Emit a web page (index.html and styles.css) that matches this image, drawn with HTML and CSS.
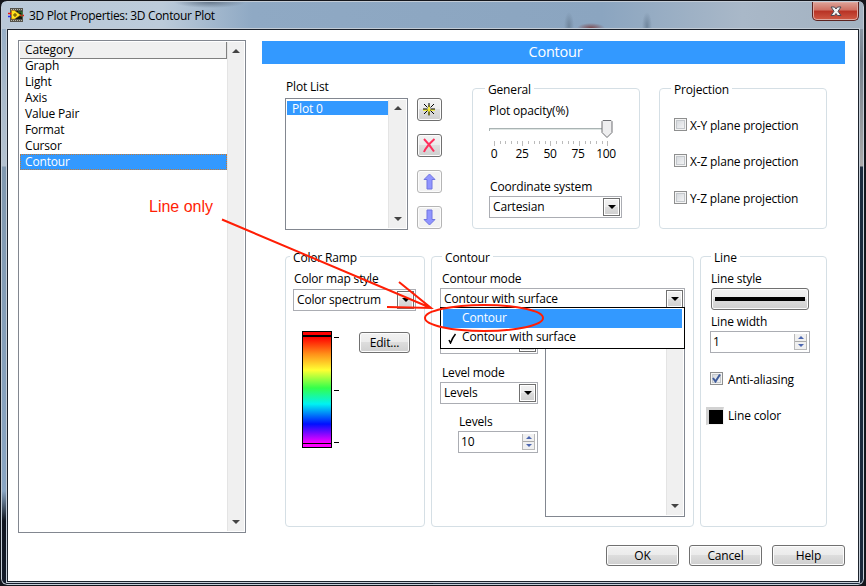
FILE: index.html
```
<!DOCTYPE html>
<html lang="en">
<head>
    <meta charset="UTF-8">
    <meta name="viewport" content="width=device-width, initial-scale=1.0">
    <title>3D Plot Properties: 3D Contour Plot</title>
    <link rel="stylesheet" href="styles.css">
</head>
<body>
    <div class="window">
        <div class="titlebar">
            <svg class="app-icon" width="16" height="15" viewBox="0 0 16 15">
                <rect x="2" y="0" width="13" height="14" fill="#55534c"/>
                <path d="M3 1.5h12M3 12.5h12" stroke="#bbb8a8" stroke-dasharray="1 1"/>
                <rect x="3" y="3" width="11" height="8" fill="#151a10"/>
                <path d="M0 5.5h4M12 7.5h4" stroke="#f01010" stroke-width="1.5"/>
                <path d="M0 8.5h4" stroke="#2030f0" stroke-width="1.5"/>
                <path d="M10 4h4v5" stroke="#3c8a3c" fill="none"/>
                <path d="M3.500 2.500h3l6 4.500-6 4h-3z" fill="#ffe61e" stroke="#c77a10" stroke-width=".6"/>
                <path d="M5 7h4M7 5v4" stroke="#5c4300"/>
            </svg>
            <span class="title">3D Plot Properties: 3D Contour Plot</span>
            <div class="close">
                <svg width="12" height="11" viewBox="0 0 12 11">
                    <path d="M1 1h3.5L6 3l1.5-2H11L8 5.3 11 9.5H7.5L6 7.500l-1.500 2H1l3-4.200z" fill="#f4f4f4" stroke="#4c4a55"/>
                </svg>
            </div>
        </div>

        <div class="client">
            <div class="listbox category">
                <ul class="items">
                    <li class="head">Category</li>
                    <li>Graph</li>
                    <li>Light</li>
                    <li>Axis</li>
                    <li>Value Pair</li>
                    <li>Format</li>
                    <li>Cursor</li>
                    <li class="selected">Contour</li>
                </ul>
                <div class="scrollbar"><i class="up"></i><i class="down"></i></div>
            </div>

            <div class="main">
                <div class="banner">Contour</div>

                <div class="row row-top">
                    <div class="plots">
                        <div class="label">Plot List</div>
                        <div class="plots-body">
                            <div class="listbox plot-list">
                                <ul class="items">
                                    <li class="selected">Plot 0</li>
                                </ul>
                                <div class="scrollbar"><i class="up"></i><i class="down"></i></div>
                            </div>
                            <div class="tools">
                                <button class="tool">
                                    <svg width="15" height="15" viewBox="0 0 15 15">
                                        <path d="M1 8h12M7 3v10" stroke="#f7ee1c" stroke-width="1.500"/>
                                        <path d="M1 7h4.500M8.500 7H13M7 1v4M7 9.500v4M2 2l3.500 3.500M12 2L8.500 5.500M2 12l3.500-3.500M12 12L8.500 8.500" stroke="#000"/>
                                    </svg>
                                </button>
                                <button class="tool">
                                    <svg width="15" height="15" viewBox="0 0 15 15">
                                        <path d="M2 1c3 3 7 8 10 12.500M12.500 1C8 5 4 9 2 14" stroke="#ff2f5c" stroke-width="2" fill="none"/>
                                    </svg>
                                </button>
                                <button class="tool disabled">
                                    <svg width="13" height="17" viewBox="0 0 13 17">
                                        <path d="M6.500 1l5.500 5.500H9v9.500H4V6.500H1z" fill="#9095ff" stroke="#7175e0"/>
                                    </svg>
                                </button>
                                <button class="tool disabled">
                                    <svg width="13" height="17" viewBox="0 0 13 17">
                                        <path d="M6.500 16l5.500-5.500H9V1H4v9.500H1z" fill="#9095ff" stroke="#7175e0"/>
                                    </svg>
                                </button>
                            </div>
                        </div>
                    </div>

                    <div class="group general">
                        <div class="legend">General</div>
                        <div class="label">Plot opacity(%)</div>
                        <svg class="slider" width="126" height="27" viewBox="0 0 126 27">
                            <path d="M0 9.500h115" stroke="#a9b3b3"/>
                            <path d="M0 10.500h115" stroke="#dfe6e4"/>
                            <path d="M.5 9v3" stroke="#a9b3b3"/>
                            <path class="minor" d="M11.500 22v3M16.500 22v3M22.500 22v3M28.500 22v3M39.500 22v3M45.500 22v3M50.500 22v3M56.500 22v3M67.500 22v3M73.500 22v3M79.500 22v3M84.500 22v3M96.500 22v3M101.500 22v3M107.500 22v3M113.500 22v3"/>
                            <path class="major" d="M5.500 22v5M33.500 22v5M61.500 22v5M90.500 22v5M118.500 22v5"/>
                            <path d="M114 1.500h8l1 1v11l-5 5-5-5v-11z" fill="#eeeeef" stroke="#6e6f73"/>
                        </svg>
                        <div class="scale">
                            <span>0</span><span>25</span><span>50</span><span>75</span><span>100</span>
                        </div>
                        <div class="label coord">Coordinate system</div>
                        <div class="select"><span>Cartesian</span><i class="drop"></i></div>
                    </div>

                    <div class="group projection">
                        <div class="legend">Projection</div>
                        <div class="check"><i class="box"></i>X-Y plane projection</div>
                        <div class="check"><i class="box"></i>X-Z plane projection</div>
                        <div class="check"><i class="box"></i>Y-Z plane projection</div>
                    </div>
                </div>

                <div class="row row-bottom">
                    <div class="group ramp">
                        <div class="legend">Color Ramp</div>
                        <div class="label">Color map style</div>
                        <div class="select"><span>Color spectrum</span><i class="drop"></i></div>
                        <div class="ramp-body">
                            <div class="spectrum"></div>
                            <div class="ticks"><i></i><i></i><i></i></div>
                            <button class="btn edit">Edit...</button>
                        </div>
                    </div>

                    <div class="group contour">
                        <div class="legend">Contour</div>
                        <div class="label">Contour mode</div>
                        <div class="select mode">
                            <span>Contour with surface</span><i class="drop"></i>
                            <ul class="menu">
                                <li class="selected">Contour</li>
                                <li>
                                    <svg class="tick" width="9" height="11" viewBox="0 0 9 11"><path d="M1 7l1.500 3C4 6 5 4 7.500 1" stroke="#000" stroke-width="1.500" fill="none"/></svg>
                                    Contour with surface
                                </li>
                            </ul>
                        </div>
                        <div class="contour-body">
                            <div class="levels">
                                <div class="select"><i class="drop"></i></div>
                                <div class="label">Level mode</div>
                                <div class="select"><span>Levels</span><i class="drop"></i></div>
                                <div class="level-count">
                                    <div class="label">Levels</div>
                                    <div class="spinner"><span>10</span><i class="arrows"><b class="inc"></b><b class="dec"></b></i></div>
                                </div>
                            </div>
                            <div class="listbox level-list">
                                <div class="items"></div>
                                <div class="scrollbar"><i class="up"></i><i class="down"></i></div>
                            </div>
                        </div>
                    </div>

                    <div class="group line">
                        <div class="legend">Line</div>
                        <div class="label">Line style</div>
                        <button class="btn line-style"><i></i></button>
                        <div class="label width-label">Line width</div>
                        <div class="spinner"><span>1</span><i class="arrows"><b class="inc"></b><b class="dec"></b></i></div>
                        <div class="check">
                            <i class="box"><svg width="9" height="9" viewBox="0 0 9 9"><path d="M1 4l2.500 3.500L8 .5" stroke="#3f5c9c" stroke-width="2" fill="none"/></svg></i>
                            Anti-aliasing
                        </div>
                        <div class="color"><i class="swatch"></i>Line color</div>
                    </div>
                </div>

                <div class="actions">
                    <button class="btn">OK</button>
                    <button class="btn">Cancel</button>
                    <button class="btn">Help</button>
                </div>
            </div>
        </div>

        <!-- callout drawn over the dialog -->
        <svg class="callout" width="866" height="586" viewBox="0 0 866 586">
            <text x="149" y="212">Line only</text>
            <path d="M222 219.500L431 308M399 282l32 26-44-1"/>
            <ellipse cx="484" cy="318" rx="59" ry="13"/>
        </svg>
    </div>
</body>
</html>
```
FILE: styles.css
```
* {
    box-sizing: border-box;
}

body {
    margin: 0;
    background: #14161c;
    font-family: "Open Sans", "Noto Sans", sans-serif;
    font-size: 12px;
    line-height: 16px;
    letter-spacing: -0.17px;
    color: #000;
}

ul {
    list-style: none;
    margin: 0;
    padding: 0;
}

i {
    display: block;
    font-style: normal;
}

.window {
    position: relative;
    width: 865px;
    height: 586px;
    padding: 0 5px 4px 6px;
    border: 1px solid #14161c;
    border-radius: 7px;
    box-shadow: inset 0 0 0 1px #c3ccd6;
    background: linear-gradient(#8fa9c4 0, #a9bacb 90px, #b4c2d0 165px, #8199b0 166px, #8aa6c4 490px, #10151f 520px, #141c2b 100%) left / 50% 100% no-repeat,
        linear-gradient(#9aa9b8 0, #75808c 60px, #aaa 165px, #1c2b3e 166px, #1c2a3c 100%) right / 50% 100% no-repeat;
    overflow: hidden;
}

.titlebar {
    display: flex;
    align-items: center;
    height: 27px;
    margin: 1px -4px 0 -5px;
    padding-left: 6px;
    background:
        radial-gradient(ellipse 14px 5px at 589px 26px, #7c4a50, transparent),
        radial-gradient(ellipse 5px 14px at 567px 24px, #71879e, transparent),
        radial-gradient(ellipse 5px 14px at 645px 24px, #71879e, transparent),
        radial-gradient(ellipse 36px 6px at 208px 0, #66788c, transparent),
        linear-gradient(90deg, #b9c8d8 0, #bccbda 160px, #8fa9c4 250px, #8ba5c0 600px, #a9b8c8 740px, #a3b2c1 100%);
}

.title {
    flex: 1;
    margin-left: 5px;
    letter-spacing: -0.33px;
}

.close {
    display: flex;
    align-items: center;
    justify-content: center;
    align-self: flex-start;
    width: 47px;
    height: 19px;
    margin-right: 4px;
    border: 1px solid #5c2320;
    border-top: 0;
    border-radius: 0 0 5px 5px;
    box-shadow: inset 0 0 0 1px #e0aaa2;
    background: linear-gradient(#dda398, #cf6f62 45%, #b83224 50%, #cf5a45);
}

.client {
    display: flex;
    width: 852px;
    height: 553px;
    padding: 10px 13px 0 10px;
    border: 1px solid #1c222c;
    outline: 1px solid #c3ccd6;
    background: #fff;
}

.listbox {
    display: flex;
    padding: 1px;
    border: 1px solid #828790;
    background: #fff;
}

.items {
    flex: 1;
}

.selected {
    background: #3399ff;
    color: #fff;
}

.category {
    width: 228px;
    height: 493px;
}

.category li {
    height: 16px;
    padding-left: 5px;
}

.category .head {
    height: 17px;
    margin-bottom: -1px;
    border: solid #808080;
    border-width: 0 1px 1px 0;
    background: #f0f0f0;
}

.category .selected {
    outline: 1px dotted #c77a33;
    outline-offset: -1px;
}

.scrollbar {
    display: flex;
    flex-direction: column;
    justify-content: space-between;
    align-items: center;
    width: 17px;
    padding: 7px 0;
    border-left: 1px solid #e4e4e4;
    background: #f0f0f0;
}

.up,
.down {
    border: 4px solid transparent;
    border-top-width: 0;
    border-bottom: 4px solid #444;
}

.down {
    border-bottom-width: 0;
    border-top: 4px solid #444;
}

.main {
    width: 583px;
    margin-left: 16px;
}

.banner {
    height: 23px;
    margin-top: 1px;
    padding-left: 4px;
    background: #3399ff;
    color: #fff;
    font-size: 14.5px;
    line-height: 22px;
    text-align: center;
    letter-spacing: -0.2px;
}

.row {
    display: flex;
    padding-left: 23px;
}

.row-top {
    height: 151px;
    margin-top: 15px;
}

.plots {
    width: 187px;
}

.plots > .label {
    margin-bottom: 3px;
    padding-left: 1px;
}

.plots-body {
    display: flex;
    gap: 9px;
}

.plot-list {
    width: 123px;
    height: 132px;
}

.plot-list li {
    height: 14px;
    margin-top: 1px;
    padding-left: 5px;
    line-height: 15px;
}

.plot-list .scrollbar {
    width: 18px;
    padding-top: 6px;
}

.tools {
    display: flex;
    flex-direction: column;
    gap: 13px;
}

.btn,
.tool {
    display: flex;
    align-items: center;
    justify-content: center;
    padding: 0;
    border: 1px solid #707070;
    border-radius: 3px;
    box-shadow: inset 0 0 0 1px #fcfcfc;
    background: linear-gradient(#f2f2f2, #ebebeb 49%, #dddddd 50%, #cfcfcf);
    font: inherit;
    letter-spacing: inherit;
    color: #000;
}

.tool {
    width: 25px;
    height: 23px;
}

.tool.disabled {
    border-color: #b5b5b5;
    background: #f2f2f2;
}

.group {
    border: 1px solid #d5dfe5;
    border-radius: 4px;
}

.legend {
    width: fit-content;
    height: 16px;
    margin-top: -7px;
    padding: 0 3px;
    background: #fff;
}

.label {
    height: 16px;
    white-space: nowrap;
}

.general,
.projection {
    width: 168px;
    height: 141px;
    margin-top: 9px;
}

.general {
    padding-left: 16px;
}

.general .legend {
    margin-left: -4px;
}

.general .label {
    margin-top: 5px;
}

.slider {
    display: block;
}

.slider .minor,
.slider .major {
    stroke: #bbb;
}

.scale {
    display: flex;
    width: 140px;
    height: 16px;
    margin-left: -9px;
}

.scale span {
    flex: 1;
    text-align: center;
    letter-spacing: -0.4px;
}

.general .coord {
    margin: 17px 0 1px 1px;
}

.select {
    position: relative;
    display: flex;
    justify-content: space-between;
    align-items: center;
    height: 22px;
    padding: 0 1px 0 3px;
    border: 1px solid #abadb3;
    background: #fff;
    white-space: nowrap;
}

.general .select {
    width: 133px;
}

.drop {
    display: flex;
    align-items: center;
    justify-content: center;
    width: 17px;
    height: 18px;
    margin-left: auto;
    border: 1px solid #707070;
    box-shadow: inset 0 0 0 1px #fff;
    background: linear-gradient(#f2f2f2, #ebebeb 49%, #dddddd 50%, #cfcfcf);
}

.drop::after {
    content: "";
    border: 4px solid transparent;
    border-top-color: #000;
    border-bottom: 0;
}

.projection {
    margin-left: 19px;
    padding-left: 14px;
}

.projection .legend {
    margin-left: -3px;
}

.check {
    display: flex;
    height: 16px;
    gap: 3px;
    white-space: nowrap;
}

.projection .check {
    margin-top: 20px;
}

.projection .check:last-child {
    margin-top: 21px;
}

.box {
    width: 13px;
    height: 13px;
    border: 1px solid #8e8f8f;
    box-shadow: inset 0 0 0 1px #f4f4f4, inset 0 0 0 2px #c4c8cc;
    background: linear-gradient(135deg, #cfd3d8, #fafafa);
}

.box svg {
    display: block;
    margin: 1px;
}

.row-bottom {
    height: 271px;
    margin-top: 26px;
    gap: 6px;
}

.row-bottom .group {
    height: 271px;
}

.row-bottom .legend + .label {
    margin-top: 5px;
}

.ramp {
    width: 140px;
    padding: 0 8px 0 7px;
}

.ramp .legend {
    margin-left: -3px;
}

.ramp .label {
    padding-left: 1px;
    margin-bottom: 2px;
}

.ramp .select {
    width: 123px;
}

.ramp-body {
    display: flex;
    align-items: flex-start;
    margin: 20px 0 0 9px;
}

.spectrum {
    width: 30px;
    height: 117px;
    border: 1px solid #000;
    background:
        linear-gradient(#000, #000) 0 3px / 100% 2px no-repeat,
        linear-gradient(#000, #000) 0 111px / 100% 1px no-repeat,
        linear-gradient(#f00 5px, #ff9019 22px, #ffff33 38px, #33ff4c 56px, #00f2f2 72px, #0010ff 92px, #ff00ff 111px);
}

.ticks {
    display: flex;
    flex-direction: column;
    justify-content: space-between;
    width: 5px;
    height: 106px;
    margin: 6px 0 0 2px;
}

.ticks i {
    height: 1px;
    background: #000;
}

.edit {
    width: 51px;
    height: 21px;
    margin: 1px 0 0 20px;
}

.contour {
    width: 263px;
    padding: 0 8px;
}

.contour .legend {
    margin-left: 2px;
}

.contour .label {
    padding-left: 2px;
}

.contour .mode {
    width: 245px;
    margin-top: 1px;
}

.menu {
    position: absolute;
    z-index: 1;
    top: 18px;
    left: -1px;
    width: 245px;
    height: 42px;
    padding: 1px 2px;
    border: 1px solid #000;
    background: #fff;
}

.menu li {
    position: relative;
    height: 19px;
    padding-left: 19px;
    line-height: 18px;
}

.tick {
    position: absolute;
    left: 5px;
    top: 5px;
}

.contour-body {
    display: flex;
    gap: 7px;
    width: 245px;
    margin-top: 22px;
}

.levels {
    width: 98px;
}

.levels .label {
    margin: 11px 0 1px;
}

.level-count {
    margin-left: 18px;
}

.level-count .label {
    margin-top: 10px;
    padding-left: 1px;
}

.level-list {
    width: 140px;
    height: 185px;
}

.level-list .scrollbar {
    margin-top: -1px;
}

.spinner {
    display: flex;
    justify-content: space-between;
    align-items: center;
    height: 22px;
    padding: 0 2px;
    border: 1px solid #abadb3;
}

.arrows {
    display: flex;
    flex-direction: column;
    gap: 1px;
    width: 13px;
    height: 16px;
    background: #aaa;
    border: 1px solid #b9b9b9;
    border-top: 0;
}

.arrows b {
    display: flex;
    flex: 1;
    align-items: center;
    justify-content: center;
    background: #f0f0f0;
}

.arrows b::after {
    content: "";
    border: 3px solid transparent;
    border-top: 0;
    border-bottom-color: #4c66b0;
}

.arrows .dec::after {
    border-top: 3px solid #4c66b0;
    border-bottom: 0;
}

.line {
    width: 127px;
    padding-left: 9px;
}

.line .legend {
    margin-left: 1px;
}

.line .label {
    padding-left: 1px;
}

.line-style {
    width: 98px;
    height: 22px;
    margin: 1px 0 0 1px;
}

.line-style i {
    width: 90px;
    height: 4px;
    background: #000;
}

.width-label {
    margin: 4px 0 1px;
}

.line .spinner {
    width: 100px;
}

.line .check {
    gap: 5px;
    margin-top: 19px;
}

.color {
    display: flex;
    align-items: center;
    height: 22px;
    margin: 17px 0 0 -4px;
}

.swatch {
    width: 18px;
    height: 18px;
    margin-right: 4px;
    border: solid #d2d2d2;
    border-width: 3px 0 0 3px;
    border-right: 1px solid #f4f4f4;
    border-bottom: 1px solid #f4f4f4;
    background: #000;
}

.actions {
    display: flex;
    justify-content: flex-end;
    gap: 10px;
    margin-top: 18px;
}

.actions .btn {
    width: 73px;
    height: 21px;
}

.callout {
    position: absolute;
    top: -1px;
    left: -1px;
    z-index: 2;
    fill: none;
    stroke: #ff1e05;
    stroke-width: 2;
}

.callout text {
    fill: #ff1e05;
    stroke: none;
    font: 16px "Liberation Sans", Arial, sans-serif;
    letter-spacing: 0;
}
```
